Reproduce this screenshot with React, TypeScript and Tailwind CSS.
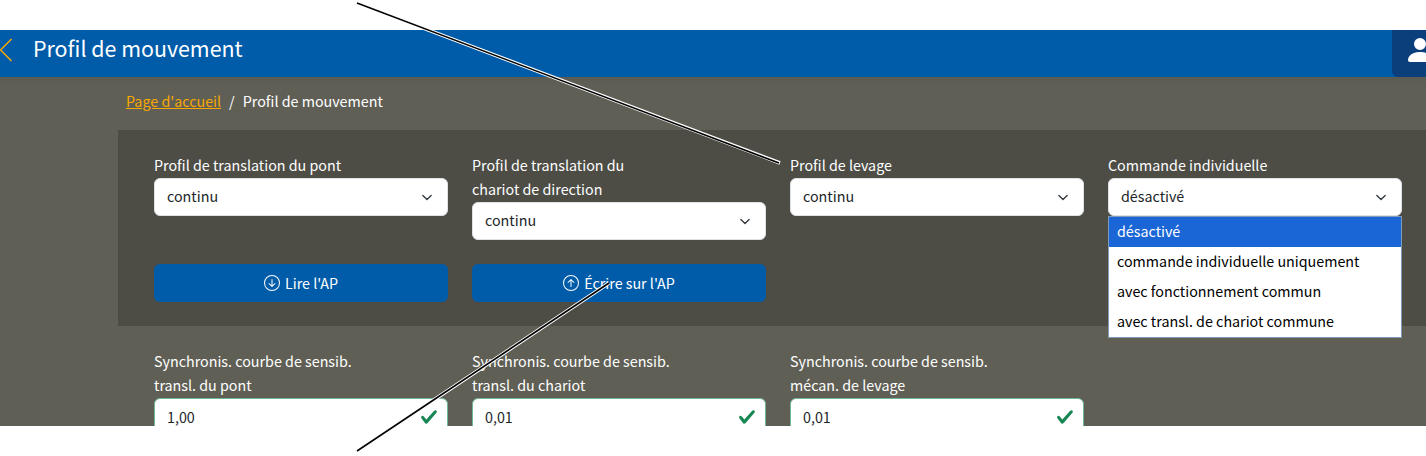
import React from 'react';

const fontClass = "font-['Noto_Sans_CJK_SC','Noto_Sans',sans-serif]";

function Chevron() {
  return (
    <svg viewBox="0 0 16 16" className="h-[11px] w-[14px]" fill="none" stroke="#343a40" strokeWidth="2" strokeLinecap="round" strokeLinejoin="round">
      <path d="m2 5 6 6 6-6" />
    </svg>
  );
}

function SelectField({ label, value }: { label: React.ReactNode; value: string }) {
  return (
    <div className="flex flex-col">
      <label className="-mt-px pb-px leading-6 text-white">{label}</label>
      <div className="flex h-[38px] items-center justify-between rounded-md border border-[#dee2e6] bg-white pl-3 pr-[13px] text-[#212529]">
        <span className="mb-[2px] leading-none">{value}</span>
        <Chevron />
      </div>
    </div>
  );
}

function NumberField({ label, value }: { label: React.ReactNode; value: string }) {
  return (
    <div className="flex flex-col">
      <label className="-mt-px pb-px leading-6 text-white">{label}</label>
      <div className="flex h-[38px] shrink-0 items-center justify-between rounded-md border border-[#6fb696] bg-white pl-[12px] pr-[9px] text-[#212529]">
        <span className="leading-none">{value}</span>
        <svg viewBox="0 0 8 8" className="h-[18px] w-[18px]" fill="#198754">
          <path d="M2.3 6.73.6 4.53c-.4-1.04.46-1.4 1.1-.8l1.1 1.4 3.4-3.8c.6-.63 1.6-.27 1.2.7l-4 4.6c-.43.5-.8.4-1.1.1z" />
        </svg>
      </div>
    </div>
  );
}

function ActionButton({ direction, children }: { direction: 'up' | 'down'; children: React.ReactNode }) {
  return (
    <button type="button" className="flex h-[38px] items-center justify-center gap-[5px] rounded-md bg-[#005ca9] text-white">
      <svg viewBox="0 0 16 16" className="h-4 w-4" fill="currentColor">
        {direction === 'down' ? (
          <path
            fillRule="evenodd"
            d="M1 8a7 7 0 1 0 14 0A7 7 0 0 0 1 8m15 0A8 8 0 1 1 0 8a8 8 0 0 1 16 0M8.5 4.5a.5.5 0 0 0-1 0v5.793L5.354 8.146a.5.5 0 1 0-.708.708l3 3a.5.5 0 0 0 .708 0l3-3a.5.5 0 0 0-.708-.708L8.5 10.293z"
          />
        ) : (
          <path
            fillRule="evenodd"
            d="M1 8a7 7 0 1 0 14 0A7 7 0 0 0 1 8m15 0A8 8 0 1 1 0 8a8 8 0 0 1 16 0m-7.5 3.5a.5.5 0 0 1-1 0V5.707L5.354 7.854a.5.5 0 1 1-.708-.708l3-3a.5.5 0 0 1 .708 0l3 3a.5.5 0 0 1-.708.708L8.5 5.707z"
          />
        )}
      </svg>
      {children}
    </button>
  );
}

const options = ['désactivé', 'commande individuelle uniquement', 'avec fonctionnement commun', 'avec transl. de chariot commune'];

export default function App() {
  return (
    <div className={`relative flex h-[456px] w-[1426px] flex-col overflow-hidden bg-white text-[14.3px] ${fontClass}`}>
      <div className="h-[30px] shrink-0" />

      <header className="relative flex h-[47px] shrink-0 items-center justify-between bg-[#005ca9] shadow-[0_4px_4px_rgba(0,0,0,0.04)]">
        <div className="mb-[7px] flex items-center">
          <svg viewBox="0 0 12 24" className="h-6 w-3" fill="none" stroke="#f9a800" strokeWidth="1.5">
            <path d="M11.5 1 0.5 12l11 11" />
          </svg>
          <h1 className="mb-[5px] ml-[21px] text-[21.4px] leading-8 text-white">Profil de mouvement</h1>
        </div>
        <div className="flex h-full w-[34px] items-center overflow-hidden rounded-bl-md bg-[#0b3f7c] pb-[7px] pl-[12px]">
          <svg viewBox="0 0 16 16" className="h-8 w-8 shrink-0" fill="white">
            <path d="M3 14s-1 0-1-1 1-4 6-4 6 3 6 4-1 1-1 1zm5-6a3 3 0 1 0 0-6 3 3 0 0 0 0 6" />
          </svg>
        </div>
      </header>

      <main className="h-[349px] shrink-0 overflow-hidden bg-[#605f56]">
        <nav className="flex h-[53px] items-center pb-[6px] pl-[126px] text-white">
          <a href="#" className="text-[#f9a800] underline">Page d'accueil</a>
          <span className="px-2">/</span>
          <span>Profil de mouvement</span>
        </nav>

        <section className="ml-[118px] bg-[#4d4d46] py-6 pl-9">
          <div className="grid grid-cols-[repeat(4,294px)] items-start gap-x-6 gap-y-6">
            <SelectField label="Profil de translation du pont" value="continu" />
            <SelectField label={<>Profil de translation du<br />chariot de direction</>} value="continu" />
            <SelectField label="Profil de levage" value="continu" />
            <div className="relative">
              <SelectField label="Commande individuelle" value="désactivé" />
              <ul className="absolute left-0 right-0 top-[62px] border border-[#7f9db9] bg-white text-black">
                {options.map((option, i) => (
                  <li key={option} className={`h-[30px] pl-2 leading-[28px] ${i === 0 ? 'bg-[#1a66d6] text-white' : ''}`}>
                    {option}
                  </li>
                ))}
              </ul>
            </div>
            <ActionButton direction="down">Lire l'AP</ActionButton>
            <ActionButton direction="up">Écrire sur l'AP</ActionButton>
          </div>
        </section>

        <section className="ml-[154px] grid grid-cols-[repeat(4,294px)] gap-x-6 pt-6">
          <NumberField label={<>Synchronis. courbe de sensib.<br />transl. du pont</>} value="1,00" />
          <NumberField label={<>Synchronis. courbe de sensib.<br />transl. du chariot</>} value="0,01" />
          <NumberField label={<>Synchronis. courbe de sensib.<br />mécan. de levage</>} value="0,01" />
        </section>
      </main>

      <div className="h-[30px] shrink-0" />

      {/* annotation arrows drawn over the screenshot */}
      <svg className="pointer-events-none absolute inset-0" width="1426" height="456" fill="none">
        <path d="M420 26.9 780 163" stroke="white" strokeWidth="3.5" />
        <path d="M357 3 779 163" stroke="black" strokeWidth="1.6" />
        <path d="M430 402.5 609 283" stroke="white" strokeWidth="3.5" />
        <path d="M357 451 609 283" stroke="black" strokeWidth="1.6" />
      </svg>
    </div>
  );
}
